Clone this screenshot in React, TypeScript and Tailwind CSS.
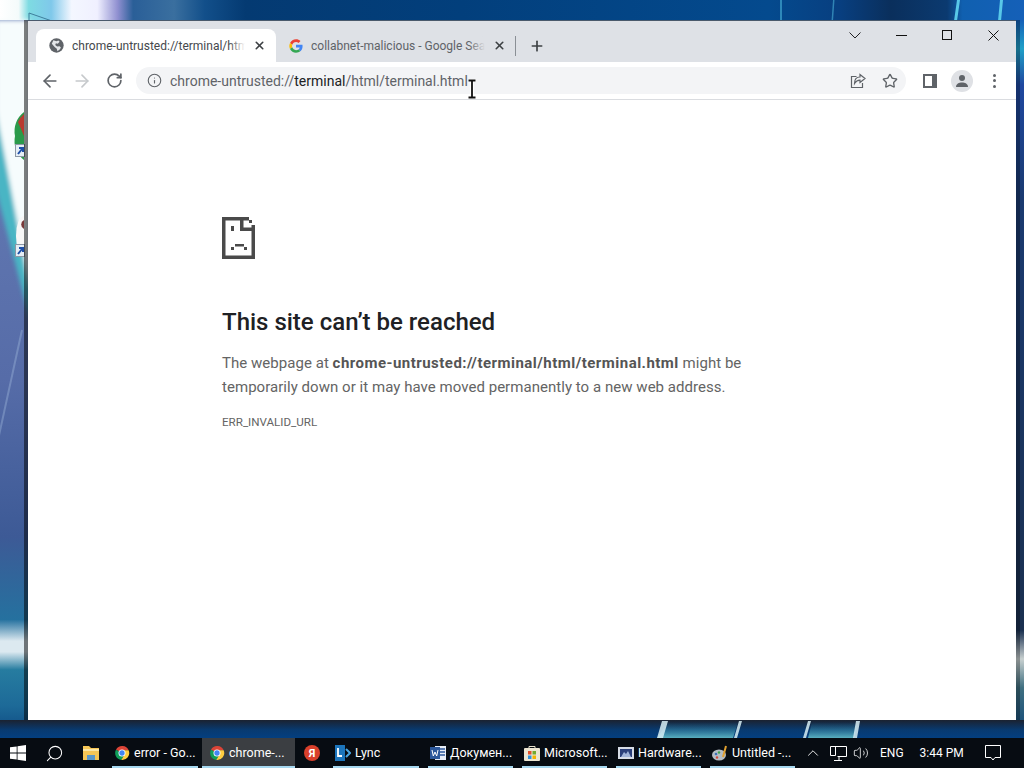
import type { ReactNode } from 'react';
import { ArrowLeft, ArrowRight, RotateCw, Info, Star, X, Plus, ChevronUp, Search, Volume2 } from 'lucide-react';

function ChromeLogo({ size = 16 }: { size?: number }) {
  return (
    <svg width={size} height={size} viewBox="0 0 48 48" className="shrink-0">
      <path d="M24 24 L6 14 A21 21 0 0 1 44 16 L24 16 Z" fill="#db4437" />
      <path d="M24 24 L6 14 A21 21 0 0 0 22 45 L32 28 Z" fill="#0f9d58" />
      <path d="M24 16 L44 16 A21 21 0 0 1 22 45 L32 28 Z" fill="#ffcd40" />
      <circle cx="24" cy="24" r="10.5" fill="#fff" />
      <circle cx="24" cy="24" r="8" fill="#4285f4" />
    </svg>
  );
}

function GoogleLogo() {
  return (
    <svg width="14" height="14" viewBox="0 0 48 48" className="shrink-0">
      <path fill="#ea4335" d="M24 10c3.500 0 6.500 1.200 8.900 3.300l6.500-6.500C35.400 3.200 30.100 1 24 1 15 1 7.300 6.200 3.500 13.700l7.600 5.900C12.900 14 18 10 24 10z" />
      <path fill="#4285f4" d="M46.500 24.500c0-1.600-.1-3.100-.4-4.500H24v9h12.700c-.6 3-2.200 5.400-4.700 7l7.300 5.700c4.300-4 7.200-9.800 7.200-17.200z" />
      <path fill="#fbbc05" d="M11.100 28.600c-.5-1.400-.7-3-.7-4.600s.3-3.100.7-4.600l-7.600-5.700C2 16.800 1 20.300 1 24s.9 7.200 2.500 10.300l7.600-5.700z" />
      <path fill="#34a853" d="M24 47c6.100 0 11.300-2 15-5.500L31.800 36c-2 1.400-4.600 2.200-7.800 2.200-6 0-11.100-4-12.900-9.500l-7.600 5.700C7.300 41.800 15 47 24 47z" />
    </svg>
  );
}

function GlobeIcon() {
  return (
    <svg width="15" height="15" viewBox="0 0 24 24" className="shrink-0">
      <circle cx="12" cy="12" r="11.500" fill="#5f6368" />
      <path fill="#e4e6e9" d="M7 3.500l5 1.500 3-1 2 2-3 3-3-.5-1 2.500 3 2.500 4-.5 2 2-1.500 3-4 3-1-4-3.500-2.500-4.500-5.500z" />
    </svg>
  );
}

function WindowsLogo() {
  return (
    <svg width="16" height="16" viewBox="0 0 16 16" fill="#fff">
      <path d="M0 2.300l6.700-.9v6.200H0zM7.500 1.300L16 0v7.600H7.500zM0 8.400h6.700v6.200L0 13.700zM7.500 8.400H16V16l-8.500-1.200z" />
    </svg>
  );
}

function FolderIcon() {
  return (
    <svg width="16" height="16" viewBox="0 0 16 16">
      <path d="M0 1h6l2 2h8v12H0z" fill="#f5c656" />
      <rect x="0" y="4" width="16" height="2" fill="#fbe6a4" />
      <rect x="4" y="10" width="8" height="5" fill="#5a97c9" />
    </svg>
  );
}

function YandexIcon() {
  return (
    <div className="w-4 h-4 rounded-full bg-[#d9402b] flex items-center justify-center shrink-0 text-white text-[11px] font-bold leading-none">
      Я
    </div>
  );
}

function LyncIcon() {
  return (
    <svg width="16" height="16" viewBox="0 0 16 16" className="shrink-0">
      <rect x="0" y="0" width="10" height="16" fill="#1c75bc" />
      <path d="M3 3v8h4" stroke="#fff" strokeWidth="1.800" fill="none" />
      <path d="M11 4l4 4-4 4" stroke="#4aa5e0" strokeWidth="2" fill="none" />
    </svg>
  );
}

function WordIcon() {
  return (
    <svg width="16" height="16" viewBox="0 0 16 16" className="shrink-0">
      <rect x="5" y="1" width="11" height="14" fill="#e8eef7" />
      <path d="M10 4h5M10 7h5M10 10h5" stroke="#2b579a" strokeWidth="1.300" />
      <rect x="0" y="2" width="10" height="12" fill="#2b579a" />
      <path d="M2 5l1.300 6 1.700-4 1.700 4L8 5" stroke="#fff" fill="none" strokeWidth="1" />
    </svg>
  );
}

function StoreIcon() {
  return (
    <svg width="16" height="16" viewBox="0 0 16 16" className="shrink-0">
      <rect x="0" y="3" width="16" height="13" rx="1" fill="#ece6d2" />
      <path d="M5 4V1.500h6V4" stroke="#e8e2cc" fill="none" />
      <rect x="4" y="6" width="3.500" height="3.500" fill="#e2502a" />
      <rect x="8.500" y="6" width="3.500" height="3.500" fill="#73a92e" />
      <rect x="4" y="10.500" width="3.500" height="3.500" fill="#2f8fd8" />
      <rect x="8.500" y="10.500" width="3.500" height="3.500" fill="#f4b400" />
    </svg>
  );
}

function HardwareIcon() {
  return (
    <svg width="16" height="16" viewBox="0 0 16 16" className="shrink-0">
      <rect x="0" y="2" width="16" height="12" fill="#d6dce6" />
      <rect x="2" y="4" width="12" height="8" fill="#2a3f7a" />
      <path d="M3 12l3-5 2 2 2-3 3 6z" fill="#9fb3d9" />
    </svg>
  );
}

function PaintIcon() {
  return (
    <svg width="16" height="16" viewBox="0 0 16 16" className="shrink-0">
      <ellipse cx="7" cy="10" rx="7" ry="5.500" fill="#b4bcc4" />
      <circle cx="4" cy="9" r="1.300" fill="#3b6fb5" />
      <circle cx="7" cy="7.500" r="1.200" fill="#3fa34d" />
      <circle cx="5" cy="12.500" r="1.200" fill="#d24a3a" />
      <path d="M11 12L14 1" stroke="#e0a030" strokeWidth="2" />
    </svg>
  );
}

function SadPage() {
  return (
    <svg width="33" height="42" viewBox="0 0 33 42" fill="#4a4a4a" className="block">
      <rect x="0" y="0" width="27" height="3.500" />
      <rect x="0" y="0" width="3.500" height="42" />
      <rect x="0" y="38.500" width="33" height="3.500" />
      <rect x="29.500" y="8" width="3.500" height="34" />
      <rect x="18" y="0" width="3.500" height="14" />
      <rect x="18" y="10.500" width="15" height="3.500" />
      <rect x="27" y="3" width="3" height="3" />
      <rect x="9" y="9" width="3" height="5" />
      <rect x="13" y="27" width="9" height="2.500" />
      <rect x="9" y="30" width="3" height="3" />
      <rect x="22" y="30" width="3" height="3" />
    </svg>
  );
}

function ShareIcon() {
  return (
    <svg width="16" height="16" viewBox="0 0 16 16" fill="none" stroke="#5f6368" strokeWidth="1.200">
      <path d="M6.500 3.500H1.500v11h11V10" />
      <path d="M15 5.500L10 1.500v2.500C6 4 4.500 7 4.500 10.500 6 8 8 7.200 10 7.200V9.500z" />
    </svg>
  );
}

function Tab({ icon, title, active, titleColor }: { icon: ReactNode; title: string; active?: boolean; titleColor: string }) {
  return (
    <div className={`relative flex items-center h-[33px] w-[240px] pl-[13px] pr-[10px] gap-[8px] rounded-t-lg ${active ? 'bg-white' : ''}`}>
      {icon}
      <div className="relative flex-1 overflow-hidden pt-[1px]">
        <span className={`block whitespace-nowrap text-[12px] ${titleColor}`}>{title}</span>
        <div className={`absolute right-0 top-0 bottom-0 w-[16px] bg-gradient-to-r from-transparent ${active ? 'to-white' : 'to-[#dee1e6]'}`} />
      </div>
      <X size={13} strokeWidth={3} className="text-[#3c4043] shrink-0" />
    </div>
  );
}

function TaskItem({ icon, label, active, width }: { icon: ReactNode; label: string; active?: boolean; width: string }) {
  return (
    <div className={`relative h-full flex items-center gap-[4px] text-[12.500px] text-white whitespace-nowrap ${width} ${active ? 'bg-[#3b3e42] pl-[7px]' : 'pl-[2px]'}`}>
      {icon}
      <span>{label}</span>
      <div className="absolute left-0 right-0 bottom-0 h-[2px] bg-[#a6d8f0]" />
    </div>
  );
}

function Wallpaper() {
  return (
    <svg width="1024" height="768" viewBox="0 0 1024 768" className="absolute inset-0">
      <defs>
        <linearGradient id="top" x1="0" x2="1" y1="0" y2="0">
          <stop offset="0" stopColor="#ffffff" />
          <stop offset="0.018" stopColor="#f4fbfb" />
          <stop offset="0.028" stopColor="#7edbe2" />
          <stop offset="0.05" stopColor="#7fc8ea" />
          <stop offset="0.07" stopColor="#f4f7ff" />
          <stop offset="0.095" stopColor="#f0f0ff" />
          <stop offset="0.115" stopColor="#8f8fd0" />
          <stop offset="0.13" stopColor="#2a5f98" />
          <stop offset="0.17" stopColor="#3a6f9f" />
          <stop offset="0.2" stopColor="#124f8a" />
          <stop offset="0.24" stopColor="#043a72" />
          <stop offset="0.45" stopColor="#023f7c" />
          <stop offset="0.75" stopColor="#044a8e" />
          <stop offset="0.82" stopColor="#083f80" />
          <stop offset="0.87" stopColor="#0a2f5c" />
          <stop offset="0.925" stopColor="#0b3a70" />
          <stop offset="0.94" stopColor="#1060b0" />
          <stop offset="1" stopColor="#1560b8" />
        </linearGradient>
        <linearGradient id="left" x1="0" x2="0" y1="0" y2="1">
          <stop offset="0" stopColor="#6a80b8" />
          <stop offset="0.5" stopColor="#566ca8" />
          <stop offset="0.72" stopColor="#3d5a96" />
          <stop offset="0.835" stopColor="#25719f" />
          <stop offset="0.865" stopColor="#dce9f0" />
          <stop offset="0.88" stopColor="#dce9f0" />
          <stop offset="0.905" stopColor="#267ca0" />
          <stop offset="0.955" stopColor="#1d6a98" />
          <stop offset="1" stopColor="#0d4680" />
        </linearGradient>
        <linearGradient id="right" x1="0" x2="0" y1="0" y2="1">
          <stop offset="0" stopColor="#1560b8" />
          <stop offset="0.04" stopColor="#20a0c8" />
          <stop offset="0.09" stopColor="#1f48a0" />
          <stop offset="0.25" stopColor="#1a3a70" />
          <stop offset="0.85" stopColor="#1a3050" />
          <stop offset="0.89" stopColor="#c8d0d0" />
          <stop offset="0.93" stopColor="#3f6f80" />
          <stop offset="1" stopColor="#0c4478" />
        </linearGradient>
        <linearGradient id="bottom" x1="0" x2="0" y1="0" y2="1">
          <stop offset="0" stopColor="#1b2230" />
          <stop offset="0.55" stopColor="#083a70" />
          <stop offset="1" stopColor="#043f80" />
        </linearGradient>
        <linearGradient id="band" x1="0" x2="0" y1="0" y2="1">
          <stop offset="0" stopColor="#2f7f9c" stopOpacity="0" />
          <stop offset="1" stopColor="#5ab0c0" stopOpacity="1" />
        </linearGradient>
        <filter id="soft"><feGaussianBlur stdDeviation="2" /></filter>
      </defs>
      <rect width="1024" height="22" fill="url(#top)" />
      <path d="M780 0h2v21h-2zM833 0h1.500l-1.500 21h-1.500z" fill="#58c8e8" opacity=".5" />
      <path d="M957 0h3l-3 21h-3zM1000 0h3l-2 21h-3z" fill="#58c8e8" />

      <rect y="20" width="28" height="718" fill="url(#left)" />
      <g filter="url(#soft)">
        <path d="M-4 20H30V300L-4 120z" fill="#f6fcfd" />
        <path d="M-4 110L30 290V320L-4 190z" fill="#49b5c4" />
      </g>
      <path d="M-2 440L22 330" stroke="#9fb8dc" strokeWidth="2" fill="none" opacity=".4" />
      <path d="M29 21V13L52 21" stroke="#3f7f9c" strokeWidth="1" fill="none" />

      <rect x="1016" y="20" width="8" height="718" fill="url(#right)" />
      <rect x="1016" y="20" width="4" height="700" fill="#000" opacity=".3" />

      <rect y="720" width="1024" height="18" fill="url(#bottom)" />
      <path d="M668 722h70l-5 16h-76zM812 722h46l-4 16h-46z" fill="url(#band)" />
      <path d="M662 721h6l-5 17h-6zM739 721h3l-5 17h-3zM808 721h3l-5 17h-3zM856 721h4l-3 17h-4z" fill="#d7eef5" opacity=".85" />

      <path d="M15 136a24 24 0 0 1 9-24v48a24 24 0 0 1-9-24z" fill="#2a9a4a" />
      <path d="M18 122a24 24 0 0 1 6-8v22z" fill="#b93a30" />
      <rect x="15.500" y="144.500" width="9" height="12" fill="#e6eef6" stroke="#8c97a5" />
      <path d="M18 154l4-5M19 148h4v4" stroke="#1d4fa8" strokeWidth="2" fill="none" />
      <path d="M24 216a8 20 0 0 0 0 40z" fill="#f7f7f7" />
      <path d="M24 220v9a5 5 0 0 1 0-9z" fill="#7a3a3a" />
      <rect x="15.500" y="244.500" width="9" height="12" fill="#e6eef6" stroke="#8c97a5" />
      <path d="M18 254l4-5M19 248h4v4" stroke="#1d4fa8" strokeWidth="2" fill="none" />
    </svg>
  );
}

export default function App() {
  return (
    <div className="relative w-[1024px] h-[768px] overflow-hidden bg-[#0b3f78] font-['Roboto',sans-serif]">
      <Wallpaper />

      {/* chrome window */}
      <div className="absolute left-[24px] top-[20px] w-[992px] h-[700px] flex flex-col border-l-4 border-t border-l-black/50 border-t-[#4a5a6c] bg-white bg-clip-padding">
        <div className="relative h-[41px] bg-[#dee1e6] flex items-end pl-[8px] shrink-0">
          <Tab active icon={<GlobeIcon />} title="chrome-untrusted://terminal/html/terminal.html" titleColor="text-[#45484c]" />
          <Tab icon={<GoogleLogo />} title="collabnet-malicious - Google Search" titleColor="text-[#5f6368]" />
          <div className="w-px h-5 bg-[#8a8f95] mb-[6px] -ml-[1px]" />
          <Plus size={16} strokeWidth={2.5} className="text-[#3c4043] ml-[13px] mb-[8px]" />
          <div className="ml-auto self-start flex items-center h-[28px]">
            <div className="w-[46px] flex justify-center">
              <svg width="12" height="7" viewBox="0 0 12 7" fill="none" stroke="#202124"><path d="M.5 .5L6 6l5.500-5.500" /></svg>
            </div>
            <div className="w-[46px] flex justify-center">
              <svg width="11" height="1" viewBox="0 0 11 1"><rect width="11" height="1" fill="#111" /></svg>
            </div>
            <div className="w-[46px] flex justify-center">
              <svg width="10" height="10" viewBox="0 0 10 10" fill="none" stroke="#111"><rect x=".5" y=".5" width="9" height="9" /></svg>
            </div>
            <div className="w-[46px] flex justify-center">
              <svg width="11" height="11" viewBox="0 0 11 11" fill="none" stroke="#111"><path d="M.5 .5l10 10M10.500 .5l-10 10" /></svg>
            </div>
          </div>
        </div>

        <div className="h-[38px] flex items-center border-b border-[#dadce0] shrink-0 text-[#5f6368]">
          <div className="w-[44px] flex justify-center"><ArrowLeft size={20} strokeWidth={2} /></div>
          <div className="w-[20px] flex justify-center"><ArrowRight size={20} strokeWidth={2} className="text-[#c6c9cc]" /></div>
          <div className="w-[44px] flex justify-center"><RotateCw size={17} strokeWidth={2.4} /></div>
          <div className="w-[770px] h-[27px] rounded-full bg-[#f3f4f6] flex items-center pl-[11px] pr-[8px]">
            <Info size={15} strokeWidth={1.8} />
            <span className="ml-[8px] pt-[1px] text-[14px] text-[#5f6368] whitespace-nowrap">
              chrome-untrusted://<span className="text-[#202124]">terminal</span>/html/terminal.html
            </span>
            <div className="ml-auto flex items-center gap-[16px]">
              <ShareIcon />
              <Star size={16} strokeWidth={2} />
            </div>
          </div>
          <svg width="14" height="14" viewBox="0 0 14 14" className="ml-[17px]">
            <rect width="14" height="14" fill="#5f6368" />
            <rect x="2" y="2" width="7" height="10" fill="#fff" />
          </svg>
          <div className="ml-[14px] w-[22px] h-[22px] rounded-full bg-[#dfe1e5] flex items-center justify-center">
            <svg width="14" height="14" viewBox="0 0 14 14" fill="#5f6368">
              <circle cx="7" cy="4" r="3" />
              <path d="M1 13c0-3.300 3-4.500 6-4.500s6 1.200 6 4.500z" />
            </svg>
          </div>
          <div className="ml-[20px] flex flex-col gap-[2.500px]">
            <span className="w-[3px] h-[3px] rounded-full bg-[#5f6368]" />
            <span className="w-[3px] h-[3px] rounded-full bg-[#5f6368]" />
            <span className="w-[3px] h-[3px] rounded-full bg-[#5f6368]" />
          </div>
        </div>

        <div className="flex-1 pl-[194px] pt-[117px]">
          <SadPage />
          <h1 className="mt-[46px] text-[24px] leading-[34px] font-medium text-[#202124]">This site can’t be reached</h1>
          <p className="mt-[12px] text-[15px] leading-[24px] tracking-[0.04px] text-[#646464] w-[560px]">
            The webpage at <strong className="font-bold tracking-[0.48px] text-[#555]">chrome-untrusted://terminal/html/terminal.html</strong> might be temporarily down or it may have moved permanently to a new web address.
          </p>
          <p className="mt-[14px] text-[11.600px] leading-[18px] text-[#646464]">ERR_INVALID_URL</p>
        </div>
      </div>

      {/* text cursor */}
      <svg width="10" height="20" viewBox="0 0 10 20" className="absolute left-[467px] top-[79px]">
        <path d="M1 1h8M1 19h8M5 1v18" stroke="#fff" strokeWidth="4" />
        <path d="M1.500 1.500h7M1.500 18.500h7M5 1.500v17" stroke="#111" strokeWidth="1.800" />
      </svg>

      {/* taskbar */}
      <div className="absolute left-0 right-0 bottom-0 h-[30px] bg-[#070c12] flex items-center">
        <div className="w-[36px] pl-[10px]"><WindowsLogo /></div>
        <div className="w-[36px] flex justify-center"><Search size={19} strokeWidth={1.3} className="text-white -scale-x-100" /></div>
        <div className="w-[40px] pl-[11px]"><FolderIcon /></div>
        <div className="h-full flex gap-[4px]">
          <TaskItem icon={<ChromeLogo />} label="error - Go..." width="w-[86px]" />
          <TaskItem active icon={<ChromeLogo />} label="chrome-..." width="w-[93px]" />
        </div>
        <div className="w-[34px] flex justify-center"><YandexIcon /></div>
        <div className="h-full flex gap-[9px] ml-[4px]">
          <TaskItem icon={<LyncIcon />} label="Lync" width="w-[86px]" />
          <TaskItem icon={<WordIcon />} label="Докумен..." width="w-[85px]" />
          <TaskItem icon={<StoreIcon />} label="Microsoft..." width="w-[85px]" />
          <TaskItem icon={<HardwareIcon />} label="Hardware..." width="w-[85px]" />
          <TaskItem icon={<PaintIcon />} label="Untitled -..." width="w-[85px]" />
        </div>
        <ChevronUp size={18} strokeWidth={1.2} className="text-white ml-[9px] shrink-0" />
        <svg width="17" height="15" viewBox="0 0 17 15" fill="none" stroke="#fff" className="ml-[8px] shrink-0">
          <path d="M4.500 .5h12v10h-9M4 14.500h8M9 10.500v4M.5 .5h5v9h-5z" />
        </svg>
        <Volume2 size={16} strokeWidth={1.2} className="text-white ml-[6px] shrink-0" />
        <span className="ml-[11px] text-[12px] text-white">ENG</span>
        <span className="ml-[16px] text-[12px] text-white whitespace-nowrap">3:44 PM</span>
        <svg width="16" height="16" viewBox="0 0 16 16" fill="none" stroke="#fff" className="ml-[21px] shrink-0">
          <path d="M.5 .5h15v12H10l-2 2.500-2-2.500H.5z" />
        </svg>
      </div>
    </div>
  );
}
